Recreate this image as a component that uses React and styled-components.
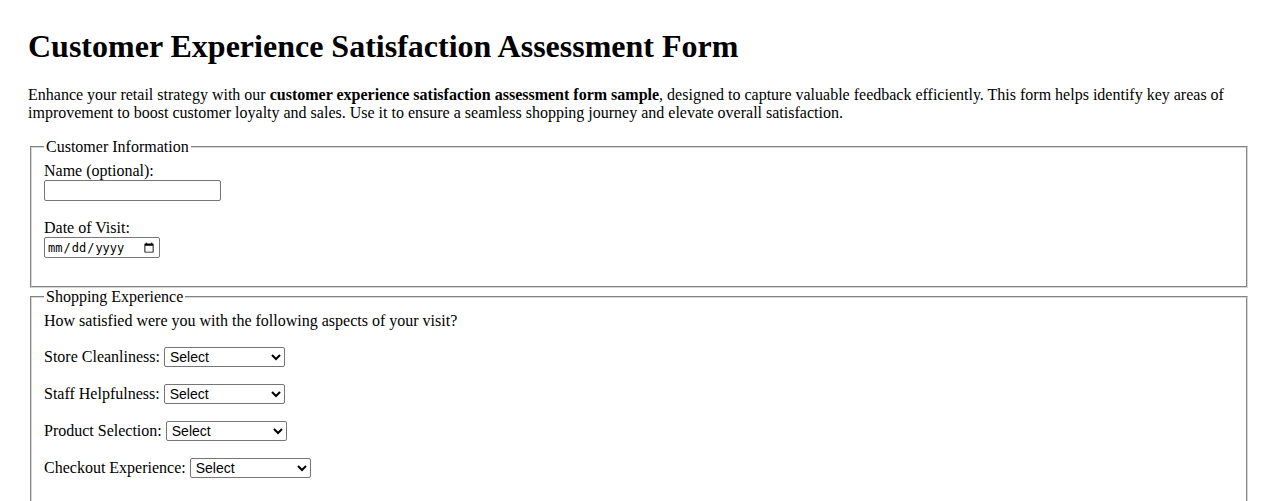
import React from 'react'
import styled, { createGlobalStyle } from 'styled-components'

const GlobalStyle = createGlobalStyle`
  body {
    margin: 8px;
    padding: 20px;
    background: #fff;
    color: #000;
    font-family: "Liberation Serif", "Times New Roman", serif;
    font-size: 16px;
  }
`

const ratingOptions = ['Very Satisfied', 'Satisfied', 'Neutral', 'Dissatisfied', 'Very Dissatisfied']

const aspects = [
  { id: 'cleanliness', label: 'Store Cleanliness:' },
  { id: 'staff', label: 'Staff Helpfulness:' },
  { id: 'selection', label: 'Product Selection:' },
  { id: 'checkout', label: 'Checkout Experience:' },
]

export default function App() {
  return (
    <>
      <GlobalStyle />
      <Title>Customer Experience Satisfaction Assessment Form</Title>
      <Intro>
        Enhance your retail strategy with our <strong>customer experience satisfaction assessment form sample</strong>,
        designed to capture valuable feedback efficiently. This form helps identify key areas of improvement to boost
        customer loyalty and sales. Use it to ensure a seamless shopping journey and elevate overall satisfaction.
      </Intro>
      <form onSubmit={(event) => event.preventDefault()}>
        <Section>
          <legend>Customer Information</legend>
          <Field $gap={18}>
            <label htmlFor="name">Name (optional):</label>
            <br />
            <TextInput type="text" id="name" name="name" />
          </Field>
          <Field $gap={18}>
            <label htmlFor="visit">Date of Visit:</label>
            <br />
            <DateInput type="date" id="visit" name="visit" />
          </Field>
        </Section>
        <Section>
          <legend>Shopping Experience</legend>
          <Question>How satisfied were you with the following aspects of your visit?</Question>
          {aspects.map((aspect) => (
            <Field key={aspect.id} $gap={17}>
              <label htmlFor={aspect.id}>{aspect.label}</label>{' '}
              <RatingSelect id={aspect.id} name={aspect.id} defaultValue="">
                <option value="">Select</option>
                {ratingOptions.map((option) => (
                  <option key={option} value={option}>{option}</option>
                ))}
              </RatingSelect>
            </Field>
          ))}
        </Section>
        <Section>
          <legend>Additional Feedback</legend>
          <Field $gap={17}>
            <label htmlFor="comments">Any other comments or suggestions?</label>
            <br />
            <textarea id="comments" name="comments" rows="4" cols="50" />
          </Field>
        </Section>
        <button type="submit">Submit Feedback</button>
      </form>
    </>
  )
}

const Title = styled.h1`
  font-size: 32px;
  font-weight: bold;
  margin: 0 0 21.44px;
`

const Intro = styled.p`
  margin: 16px 0;
`

const Section = styled.fieldset`
  margin: 0 2px;
  padding: 5.6px 12px 10px;
  border: 2px groove rgb(215, 215, 215);

  legend {
    padding: 0 2px;
  }
`

const Field = styled.div`
  margin-bottom: ${(props) => props.$gap}px;
`

const Question = styled.p`
  margin: 0 0 17px;
`

const TextInput = styled.input`
  font-family: Arial, "Liberation Sans", sans-serif;
  font-size: 13.33px;
  width: 177px;
  height: 21px;
  box-sizing: border-box;
  border: 1px solid #767676;
  border-radius: 2px;
  padding: 1px 2px;
`

const DateInput = styled.input`
  font-family: "DejaVu Sans Mono", monospace;
  font-size: 12px;
  width: 116px;
  height: 21px;
  box-sizing: border-box;
  border: 1px solid #767676;
  border-radius: 2px;
  padding: 1px 2px;
`

const RatingSelect = styled.select`
  font-family: Arial, "Liberation Sans", sans-serif;
  font-size: 14px;
  width: 121px;
  height: 20px;
  box-sizing: border-box;
  border: 1px solid #767676;
  border-radius: 2px;
  padding: 0 1px;
  background: #fff;
  color: #000;
`
